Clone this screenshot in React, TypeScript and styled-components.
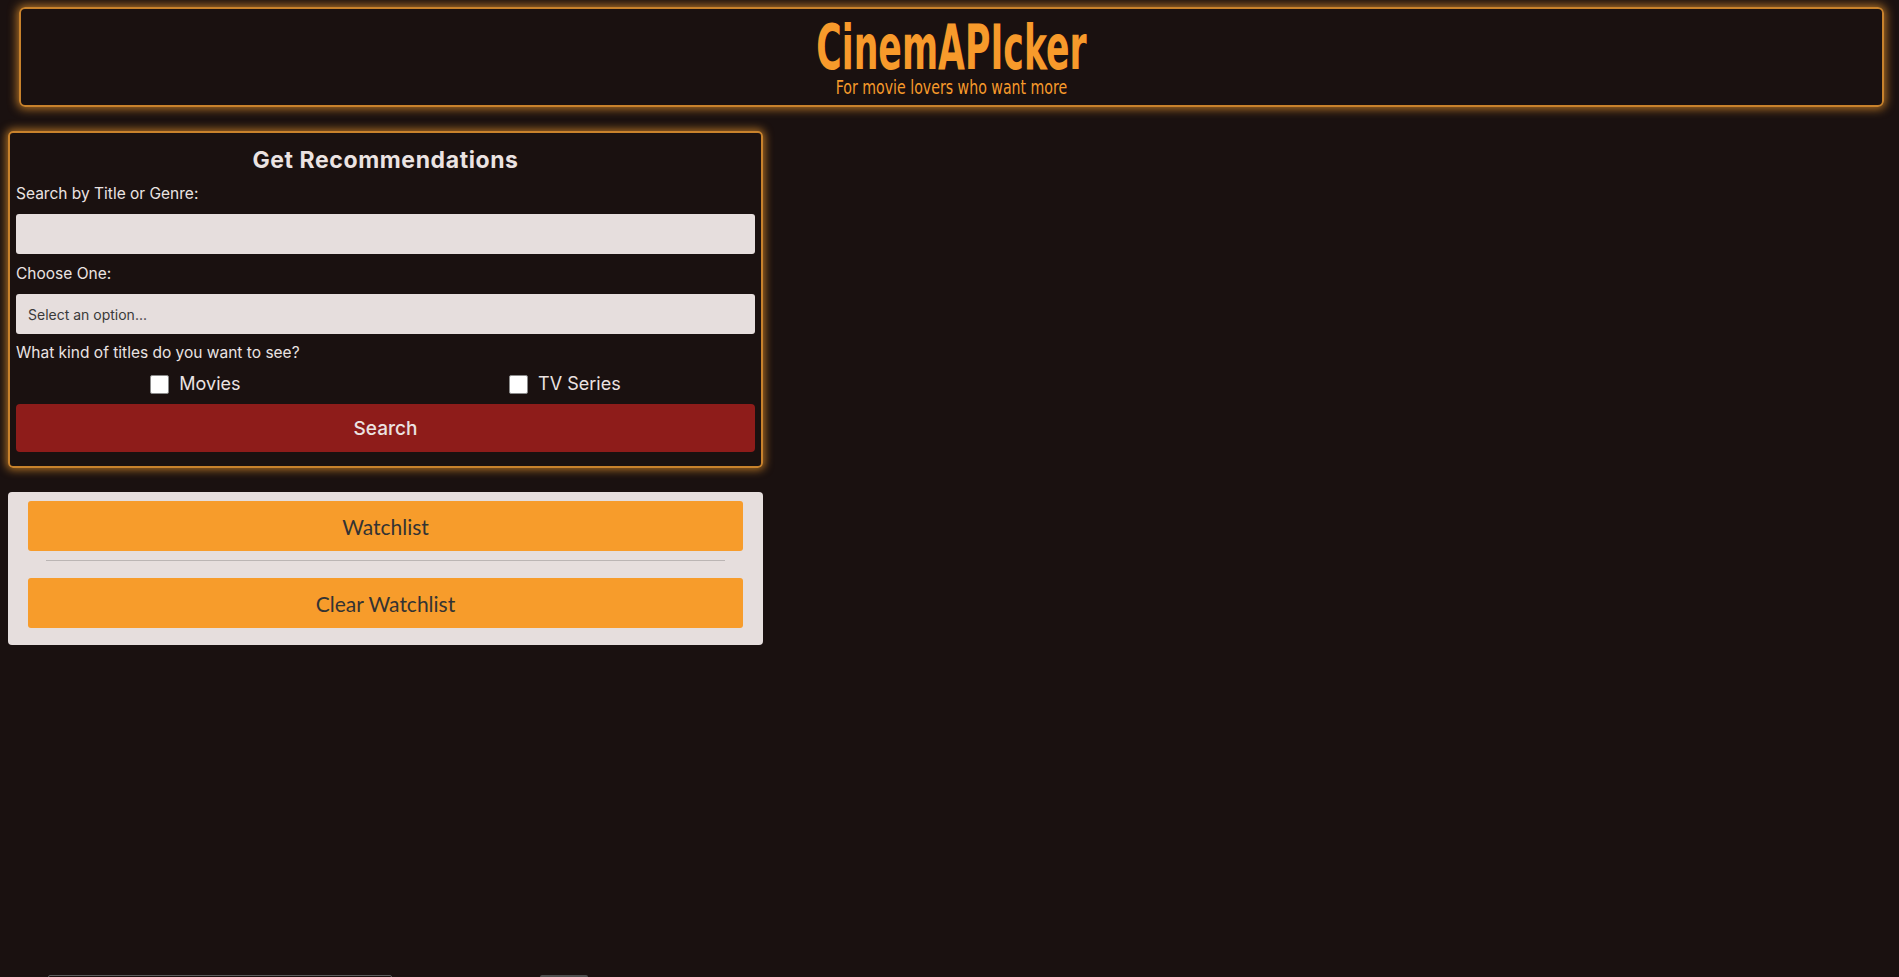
import React from "react";
import styled, { createGlobalStyle } from "styled-components";

const GlobalStyle = createGlobalStyle`
  html, body {
    margin: 0;
    padding: 0;
    background: #1a1110;
  }
  body {
    font-family: Inter, "Noto Sans", sans-serif;
    overflow: hidden;
  }
  * { box-sizing: border-box; }
`;

const Page = styled.div`
  display: flex;
  flex-direction: column;
  min-height: 977px;
`;

const Header = styled.header`
  margin: 7px 15px 0 19px;
  height: 100px;
  border: 2px solid #c8822c;
  border-radius: 6px;
  box-shadow: 0 0 10px 2px rgba(214, 136, 42, 0.8);
  display: flex;
  flex-direction: column;
  align-items: center;
  padding-top: 9px;
  color: #f79a2b;
`;

const Title = styled.h1`
  margin: 0;
  font-family: "DejaVu Sans", sans-serif;
  font-weight: 700;
  font-size: 62px;
  line-height: 60px;
  transform: scaleX(0.56);
  white-space: nowrap;
`;

const Tagline = styled.p`
  margin: 0;
  font-family: "DejaVu Sans", sans-serif;
  font-size: 19px;
  line-height: 19px;
  transform: scaleX(0.745);
  white-space: nowrap;
`;

const Panel = styled.section`
  margin: 24px 0 0 8px;
  width: 755px;
  border: 2px solid #c8822c;
  border-radius: 5px;
  box-shadow: 0 0 9px 2px rgba(214, 136, 42, 0.75);
  padding: 12px 6px 14px;
  display: flex;
  flex-direction: column;
  color: #ebe3e2;
`;

const PanelTitle = styled.h2`
  margin: 0;
  text-align: center;
  font-size: 23px;
  letter-spacing: 0.6px;
  line-height: 30px;
  font-weight: 700;
`;

const Label = styled.label<{ $gap: number }>`
  margin-top: ${(p) => p.$gap}px;
  font-size: 15.5px;
  line-height: 20px;
`;

const TextInput = styled.input`
  margin-top: 10px;
  height: 40px;
  border: none;
  border-radius: 3px;
  background: #e6dedd;
  padding: 0 12px;
  font: inherit;
  font-size: 14px;
`;

const Select = styled.select`
  margin-top: 10px;
  height: 40px;
  border: none;
  border-radius: 3px;
  background: #e6dedd;
  padding: 0 12px;
  font-family: inherit;
  font-size: 14px;
  color: #3a3a3a;
  appearance: none;
`;

const CheckRow = styled.div`
  margin-top: 7px;
  height: 28px;
  display: flex;
  justify-content: space-around;
  align-items: center;
`;

const CheckItem = styled.label`
  display: flex;
  align-items: center;
  gap: 10px;
  font-size: 18px;
  line-height: 28px;
`;

const Box = styled.input`
  appearance: none;
  margin: 0;
  width: 19px;
  height: 19px;
  background: #fff;
  border: 1px solid #8a8a8a;
  border-radius: 2px;
`;

const SearchButton = styled.button`
  margin-top: 6px;
  height: 48px;
  border: none;
  border-radius: 4px;
  background: #8e1c1a;
  color: #ebe3e2;
  font-family: Inter, sans-serif;
  font-size: 19px;
  font-weight: 500;
`;

const WatchPanel = styled.section`
  margin: 24px 0 0 8px;
  width: 755px;
  height: 153px;
  background: #e6dedd;
  border-radius: 4px;
  padding: 9px 20px 0;
  display: flex;
  flex-direction: column;
`;

const OrangeButton = styled.button`
  height: 50px;
  border: none;
  border-radius: 3px;
  background: #f79c2b;
  color: #333;
  font-family: Lato, "Open Sans", sans-serif;
  font-size: 21px;
`;

const Divider = styled.hr`
  margin: 9px 18px 17px;
  border: none;
  border-top: 1px solid #bbb5b4;
  height: 0;
`;

const Results = styled.div`
  margin-top: 330px;
  padding-left: 48px;
  display: flex;
  gap: 148px;
`;

const ResultInput = styled.div`
  width: 344px;
  height: 30px;
  border: 1px solid #5e5e5e;
  border-radius: 2px;
`;

const ResultButton = styled.div`
  width: 48px;
  height: 30px;
  background: #4e4e4e;
  border-radius: 2px;
`;

export default function App() {
  return (
    <>
      <GlobalStyle />
      <Page>
        <Header>
          <Title>CinemAPIcker</Title>
          <Tagline>For movie lovers who want more</Tagline>
        </Header>
        <Panel>
          <PanelTitle>Get Recommendations</PanelTitle>
          <Label $gap={9}>Search by Title or Genre:</Label>
          <TextInput type="text" />
          <Label $gap={10}>Choose One:</Label>
          <Select defaultValue="">
            <option value="">Select an option...</option>
            <option value="title">Title</option>
            <option value="genre">Genre</option>
          </Select>
          <Label $gap={9}>What kind of titles do you want to see?</Label>
          <CheckRow>
            <CheckItem>
              <Box type="checkbox" />
              Movies
            </CheckItem>
            <CheckItem>
              <Box type="checkbox" />
              TV Series
            </CheckItem>
          </CheckRow>
          <SearchButton>Search</SearchButton>
        </Panel>
        <WatchPanel>
          <OrangeButton>Watchlist</OrangeButton>
          <Divider />
          <OrangeButton>Clear Watchlist</OrangeButton>
        </WatchPanel>
        <Results>
          <ResultInput />
          <ResultButton />
        </Results>
      </Page>
    </>
  );
}
